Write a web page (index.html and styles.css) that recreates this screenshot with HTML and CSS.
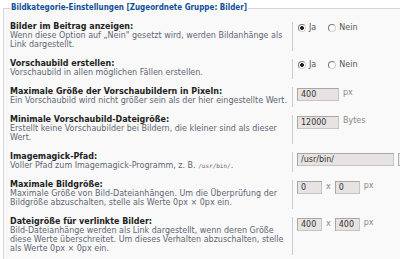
FILE: index.html
```html
<html>
<head>
    <meta charset="UTF-8">
    <title>Bildkategorie-Einstellungen</title>
    <link rel="stylesheet" href="styles.css">
</head>
<body>
<fieldset class="settings">
    <legend>Bildkategorie-Einstellungen [Zugeordnete Gruppe: Bilder]</legend>

    <dl class="row">
        <dt><label>Bilder im Beitrag anzeigen:</label><span>Wenn diese Option auf „Nein" gesetzt wird, werden Bildanhänge als Link dargestellt.</span></dt>
        <dd>
            <label class="radio"><input type="radio" name="img_display" checked>Ja</label>
            <label class="radio"><input type="radio" name="img_display">Nein</label>
        </dd>
    </dl>

    <dl class="row">
        <dt><label>Vorschaubild erstellen:</label><span>Vorschaubild in allen möglichen Fällen erstellen.</span></dt>
        <dd>
            <label class="radio"><input type="radio" name="img_create_thumbnail" checked>Ja</label>
            <label class="radio"><input type="radio" name="img_create_thumbnail">Nein</label>
        </dd>
    </dl>

    <dl class="row">
        <dt><label>Maximale Größe der Vorschaubildern in Pixeln:</label><span>Ein Vorschaubild wird nicht größer sein als der hier eingestellte Wert.</span></dt>
        <dd><input type="text" class="text w-mid" value="400"><span class="unit">px</span></dd>
    </dl>

    <dl class="row">
        <dt><label>Minimale Vorschaubild-Dateigröße:</label><span>Erstellt keine Vorschaubilder bei Bildern, die kleiner sind als dieser Wert.</span></dt>
        <dd><input type="text" class="text w-mid" value="12000"><span class="unit">Bytes</span></dd>
    </dl>

    <dl class="row">
        <dt><label>Imagemagick-Pfad:</label><span>Voller Pfad zum Imagemagick-Programm, z. B. <code>/usr/bin/</code>.</span></dt>
        <dd><input type="text" class="text w-long" value="/usr/bin/"><button type="button" class="search"></button></dd>
    </dl>

    <dl class="row">
        <dt><label>Maximale Bildgröße:</label><span>Maximale Größe von Bild-Dateianhängen. Um die Überprüfung der Bildgröße abzuschalten, stelle als Werte 0px × 0px ein.</span></dt>
        <dd><input type="text" class="text w-small" value="0"><span class="times">x</span><input type="text" class="text w-small" value="0"><span class="unit">px</span></dd>
    </dl>

    <dl class="row">
        <dt><label>Dateigröße für verlinkte Bilder:</label><span>Bild-Dateianhänge werden als Link dargestellt, wenn deren Größe diese Werte überschreitet. Um dieses Verhalten abzuschalten, stelle als Werte 0px × 0px ein.</span></dt>
        <dd><input type="text" class="text w-small" value="400"><span class="times">x</span><input type="text" class="text w-small" value="400"><span class="unit">px</span></dd>
    </dl>
</fieldset>
</body>
</html>
```

FILE: styles.css
```css
* {
    padding: 0;
    margin: 0;
    box-sizing: border-box;
}

html {
    overflow: hidden;
}

body {
    background-color: #ffffff;
    font-family: "DejaVu Sans", Verdana, sans-serif;
    font-size: 8px;
    line-height: 9px;
    color: #333333;
}

.settings {
    width: 397px;
    margin: 3px 0 0 3px;
    padding: 4px 0 6px 6px;
    border: 1px solid #d7d7d7;
    border-right: none;
    background-color: #f9f9f9;
    overflow: hidden;
}

.settings legend {
    padding: 0 1px;
    font-family: "DejaVu Sans Condensed", Tahoma, sans-serif;
    font-weight: bold;
    font-size: 8px;
    line-height: 10px;
    color: #115098;
}

.row {
    display: grid;
    grid-template-columns: 282px 1fr;
    padding: 5px 0 5px 0;
}

.row dt label {
    display: block;
    font-weight: bold;
    color: #222222;
}

.row dt span {
    display: block;
    padding-right: 4px;
    color: #5e6573;
}

.row dt code {
    font-family: "DejaVu Sans Mono", monospace;
    font-size: 6px;
}

.row dd {
    display: flex;
    align-self: stretch;
    align-items: flex-start;
    padding: 1px 0 0 4px;
    margin-bottom: -2px;
    border-left: 1px solid #cccccc;
    color: #888888;
}

.radio {
    display: flex;
    align-items: center;
    margin-right: 11px;
    color: #555555;
    cursor: pointer;
}

.radio input {
    appearance: none;
    width: 8px;
    height: 8px;
    margin: 0 3px 0 1px;
    border: 1px solid #7a7a7a;
    border-right-color: #d0d0d0;
    border-bottom-color: #d0d0d0;
    border-radius: 50%;
    background-color: #ffffff;
}

.radio input:checked {
    background: radial-gradient(circle, #222222 0, #222222 1.6px, #ffffff 2.2px);
}

.text {
    height: 13px;
    padding: 0 3px;
    font-family: "DejaVu Sans", Verdana, sans-serif;
    font-size: 8px;
    color: #333333;
    background-color: #e8e3e3;
    border: 1px solid #c8c4c4;
    border-top-color: #a9a6a6;
    border-left-color: #a9a6a6;
    outline: none;
}

.w-small {
    width: 25px;
}

.w-mid {
    width: 42px;
}

.w-long {
    width: 97px;
}

.unit {
    margin-left: 4px;
    line-height: 10px;
}

.times {
    margin: 0 4px;
    line-height: 12px;
}

.search {
    flex-shrink: 0;
    width: 8px;
    height: 13px;
    margin-left: 4px;
    background-color: #e8e8e8;
    border: 1px solid #b0b0b0;
}
```
